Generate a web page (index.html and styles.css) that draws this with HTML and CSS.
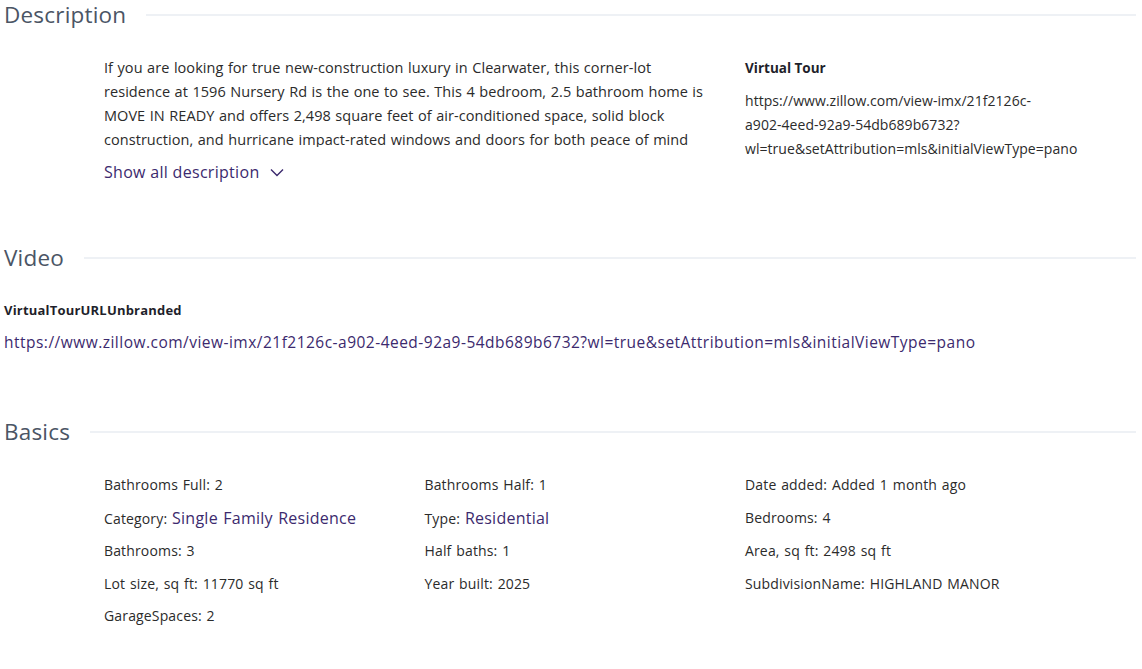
FILE: index.html
```html
<!DOCTYPE html>
<html>
<head>
<meta charset="utf-8">
<link rel="stylesheet" href="styles.css">
</head>
<body>
<div class="page">
  <section class="section sec-desc">
    <div class="sec-head"><h2 class="sec-title">Description</h2><div class="sec-rule"></div></div>
    <div class="desc-grid">
      <div class="desc-main">
        <div class="desc-text">If you are looking for true new-construction luxury in Clearwater, this corner-lot residence at 1596 Nursery Rd is the one to see. This 4 bedroom, 2.5 bathroom home is MOVE IN READY and offers 2,498 square feet of air-conditioned space, solid block construction, and hurricane impact-rated windows and doors for both peace of mind and lower insurance costs. Step inside to an open floor plan filled with natural light.</div>
        <a class="show-all">Show all description <svg class="chev" width="14" height="9" viewBox="0 0 14 9"><polyline points="1,1.5 7,7.5 13,1.5" fill="none" stroke="#3c2a6e" stroke-width="1.4"/></svg></a>
      </div>
      <div class="desc-side">
        <div class="side-label">Virtual Tour</div>
        <div class="side-url">https://www.zillow.com/view-imx/21f2126c-a902-4eed-92a9-54db689b6732?wl=true&amp;setAttribution=mls&amp;initialViewType=pano</div>
      </div>
    </div>
  </section>

  <section class="section sec-video">
    <div class="sec-head"><h2 class="sec-title">Video</h2><div class="sec-rule"></div></div>
    <div class="video-label">VirtualTourURLUnbranded</div>
    <a class="video-url">https://www.zillow.com/view-imx/21f2126c-a902-4eed-92a9-54db689b6732?wl=true&amp;setAttribution=mls&amp;initialViewType=pano</a>
  </section>

  <section class="section sec-basics">
    <div class="sec-head"><h2 class="sec-title">Basics</h2><div class="sec-rule"></div></div>
    <div class="basics-grid">
      <div class="fact">Bathrooms Full: 2</div>
      <div class="fact">Bathrooms Half: 1</div>
      <div class="fact">Date added: Added 1 month ago</div>
      <div class="fact">Category: <span class="link">Single Family Residence</span></div>
      <div class="fact">Type: <span class="link">Residential</span></div>
      <div class="fact">Bedrooms: 4</div>
      <div class="fact">Bathrooms: 3</div>
      <div class="fact">Half baths: 1</div>
      <div class="fact">Area, sq ft: 2498 sq ft</div>
      <div class="fact">Lot size, sq ft: 11770 sq ft</div>
      <div class="fact">Year built: 2025</div>
      <div class="fact">SubdivisionName: HIGHLAND MANOR</div>
      <div class="fact">GarageSpaces: 2</div>
    </div>
  </section>
</div>
</body>
</html>
```

FILE: styles.css
```css
* { box-sizing: border-box; }
html, body { margin: 0; padding: 0; background: #fff; }
body {
  font-family: "Open Sans", "Noto Sans", "Liberation Sans", sans-serif;
  color: #2b2b2b;
  font-size: 14px;
}
.page { padding: 0 6px 0 4px; }

.sec-head {
  display: flex;
  align-items: center;
  gap: 20px;
  height: 30px;
}
.sec-title {
  margin: 0;
  font-size: 22.5px;
  font-weight: 400;
  letter-spacing: 0.2px;
  color: #4b5565;
  line-height: 30px;
  white-space: nowrap;
}
.sec-rule {
  flex: 1;
  height: 2px;
  background: #eef1f5;
}

.desc-grid {
  display: grid;
  grid-template-columns: 641px 320px;
  padding-left: 100px;
  margin-top: 26px;
}
.desc-main { padding-right: 30px; }
.desc-text {
  font-size: 14.5px;
  letter-spacing: 0.05px;
  word-spacing: 0.7px;
  line-height: 24px;
  max-height: 91px;
  overflow: hidden;
  color: #2b2b2b;
}
.show-all {
  display: inline-flex;
  align-items: center;
  gap: 10px;
  margin-top: 13px;
  font-size: 16px;
  letter-spacing: 0.3px;
  line-height: 24px;
  color: #3c2a6e;
  cursor: pointer;
}
.chev { margin-top: 1px; }

.side-label {
  font-weight: 700;
  font-size: 13.5px;
  line-height: 24px;
  color: #1f1f2b;
}
.side-url {
  margin-top: 9px;
  line-height: 24px;
  letter-spacing: 0.05px;
  color: #2b2b2b;
}

.sec-video { margin-top: 59px; }
.video-label {
  margin-top: 28px;
  font-weight: 700;
  font-size: 13px;
  letter-spacing: 0.2px;
  line-height: 18px;
  color: #1f1f2b;
}
.video-url {
  display: block;
  margin-top: 11px;
  font-size: 15.5px;
  letter-spacing: 0.48px;
  line-height: 24px;
  color: #3c2a6e;
  white-space: nowrap;
}

.sec-basics { margin-top: 63px; }
.basics-grid {
  display: grid;
  grid-template-columns: repeat(3, 320.5px);
  padding-left: 100px;
  margin-top: 26px;
  row-gap: 8.5px;
}
.fact {
  line-height: 24px;
  letter-spacing: 0.15px;
  word-spacing: 1px;
  color: #2b2b2b;
}
.link {
  font-size: 16px;
  letter-spacing: 0.25px;
  color: #3c2a6e;
}
```
